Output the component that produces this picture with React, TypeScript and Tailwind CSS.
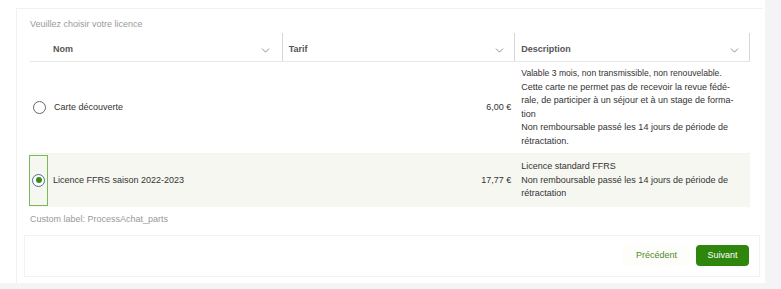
import { ChevronDown } from 'lucide-react';

const rows = [
  {
    id: 'decouverte',
    name: 'Carte découverte',
    price: '6,00 €',
    lines: [
      { text: 'Valable 3 mois, non transmissible, non renouvelable.', tight: true },
      { text: 'Cette carte ne permet pas de recevoir la revue fédé-' },
      { text: 'rale, de participer à un séjour et à un stage de forma-' },
      { text: 'tion' },
      { text: 'Non remboursable passé les 14 jours de période de' },
      { text: 'rétractation.' },
    ],
    selected: false,
  },
  {
    id: 'ffrs',
    name: 'Licence FFRS saison 2022-2023',
    price: '17,77 €',
    lines: [
      { text: 'Licence standard FFRS' },
      { text: 'Non remboursable passé les 14 jours de période de' },
      { text: 'rétractation' },
    ],
    selected: true,
  },
];

function Radio({ checked }: { checked: boolean }) {
  if (checked) {
    return (
      <span className="flex h-[13px] w-[13px] items-center justify-center rounded-full border-[1.5px] border-[#4d6b96] bg-white">
        <span className="h-[6px] w-[6px] rounded-full bg-[#3c8a1c]" />
      </span>
    );
  }
  return <span className="h-[13px] w-[13px] rounded-full border border-[#666] bg-white" />;
}

export default function App() {
  return (
    <div
      className="flex h-[289px] w-[781px] flex-col bg-[#f4f4f6] text-[9px] text-[#333]"
      style={{ fontFamily: '"Liberation Sans", Arial, sans-serif' }}
    >
      <div className="h-[283px] w-[765px] bg-white pl-4 pt-2">
        {/* Card */}
        <div className="flex h-[275px] w-[747px] flex-col border-l border-t border-[#f1f1f1] pl-[7px] pr-[3px]">
          <div className="flex flex-col pl-[6px] pr-[10px]">
            <p className="mt-[9px] leading-[13px] text-[#9a9a9a]">Veuillez choisir votre licence</p>

            {/* Table */}
            <div className="mt-[7px]">
              {/* Header */}
              <div className="flex h-[24px] border-b border-[#e6e6e6] font-bold text-[#555]">
                <div className="flex w-[252px] items-center justify-between pl-[23px] pr-[10px] pt-[1px]">
                  <span>Nom</span>
                  <ChevronDown className="h-[13px] w-[13px] text-[#777]" strokeWidth={1.5} />
                </div>
                <div className="-mt-[5px] flex w-[233px] items-center justify-between border-l border-[#d6d6d6] pl-[6px] pr-[8px] pt-[6px]">
                  <span>Tarif</span>
                  <ChevronDown className="h-[13px] w-[13px] text-[#777]" strokeWidth={1.5} />
                </div>
                <div className="-mt-[5px] flex w-[236px] items-center justify-between border-x border-[#d6d6d6] pl-[6px] pr-[8px] pt-[6px]">
                  <span>Description</span>
                  <ChevronDown className="h-[13px] w-[13px] text-[#777]" strokeWidth={1.5} />
                </div>
              </div>

              {/* Rows */}
              {rows.map((row) => (
                <div
                  key={row.id}
                  className={`flex items-stretch ${row.selected ? 'bg-[#f6f7f1]' : 'border-b border-[#f3f3ee] bg-white'}`}
                >
                  <div className="flex w-[252px] items-center">
                    <div
                      className={`flex w-[19px] items-center justify-center self-stretch ${row.selected ? '-ml-[1px] my-[1px] border border-[#7cb85a]' : ''}`}
                    >
                      <Radio checked={row.selected} />
                    </div>
                    <span className="pl-[5px]">{row.name}</span>
                  </div>
                  <div className="flex w-[233px] items-center justify-end pr-[3px]">{row.price}</div>
                  <div className={`w-[236px] pl-[7px] leading-[13.5px] ${row.selected ? 'py-[6px]' : 'py-[5px]'}`}>
                    {row.lines.map((line, i) => (
                      <div key={i} className={`whitespace-nowrap ${line.tight ? 'text-[8.6px]' : ''}`}>
                        {line.text}
                      </div>
                    ))}
                  </div>
                </div>
              ))}
            </div>

            <p className="mt-[6px] leading-[13px] text-[#999]">Custom label: ProcessAchat_parts</p>
          </div>

          {/* Footer */}
          <div className="mt-[9px] flex h-[42px] items-center justify-end gap-[6px] border border-[#f2f2f2] pr-[10px]">
            <button className="h-[21px] rounded-sm bg-[#fdfdf9] px-[13px] text-[#4e8a2c]">Précédent</button>
            <button className="h-[21px] w-[53px] rounded-sm bg-[#2e860d] text-white">Suivant</button>
          </div>
        </div>
      </div>
    </div>
  );
}
